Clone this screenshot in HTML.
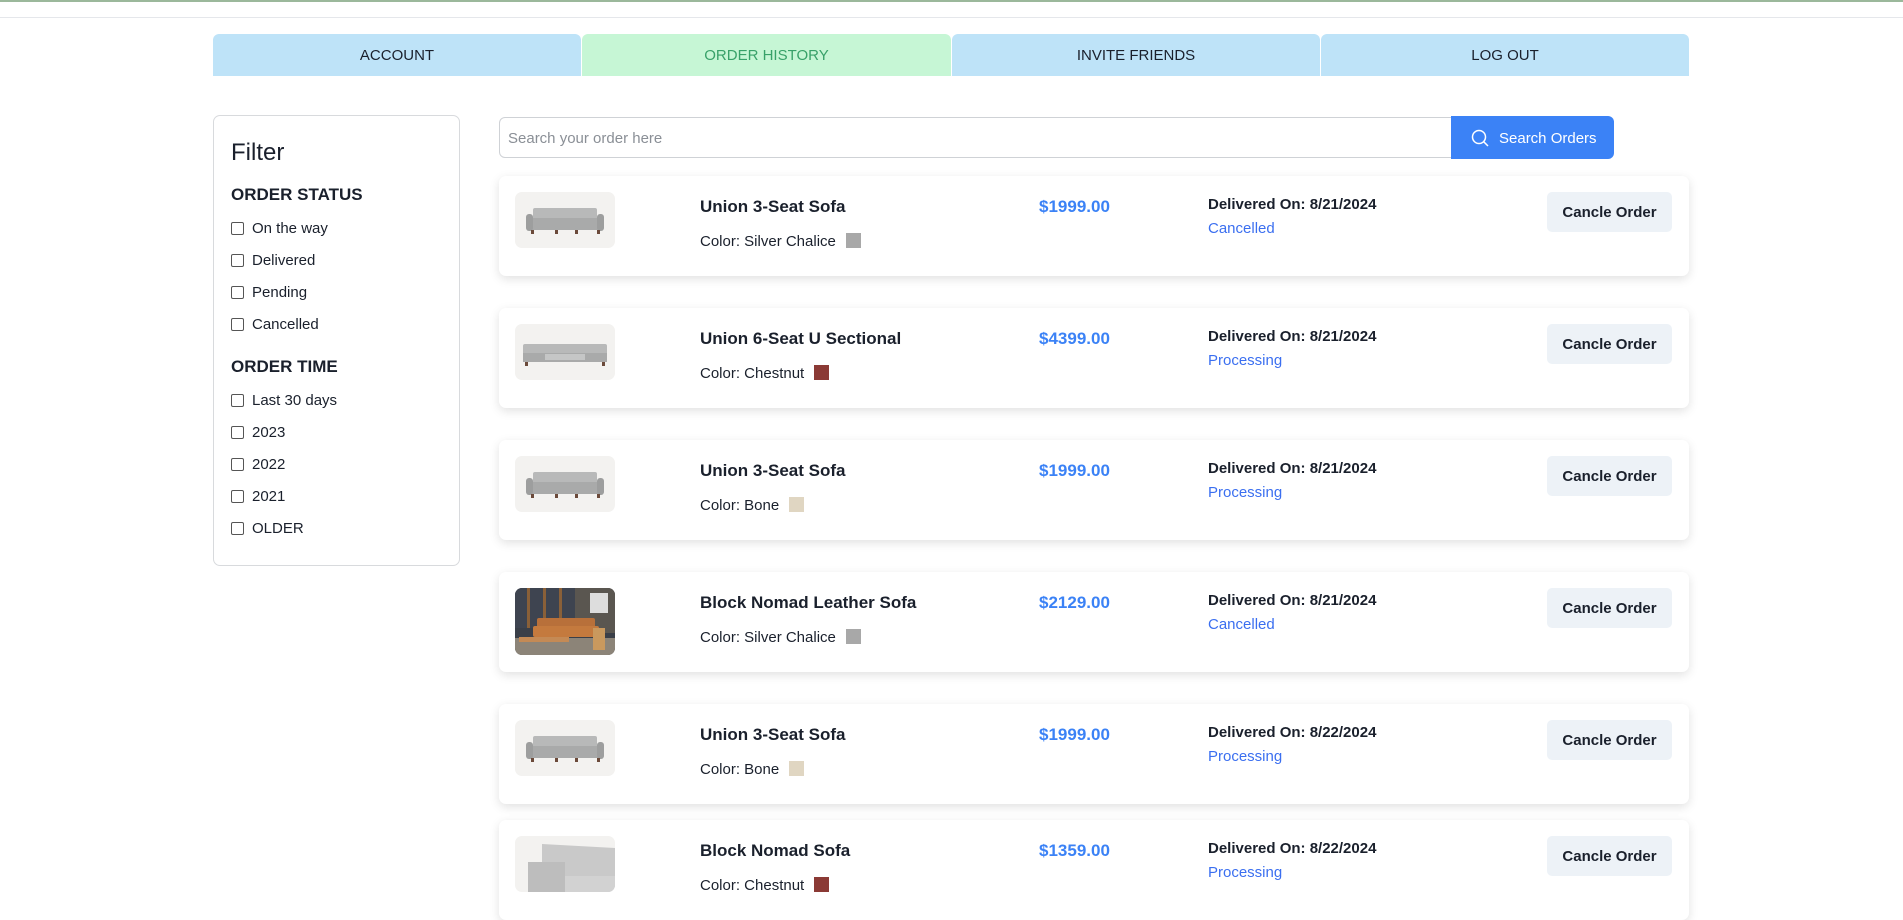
<!DOCTYPE html>
<html><head><meta charset="utf-8"><style>
*{box-sizing:border-box;margin:0;padding:0}
body{width:1903px;height:920px;overflow:hidden;background:#fff;font-family:"Liberation Sans",sans-serif;color:#1a202c;position:relative}
.topl{position:absolute;left:0;top:0;width:1903px;height:2px;background:#9bb89b}
.grl{position:absolute;left:0;top:17px;width:1903px;height:1px;background:#e5e7eb}
.tab{position:absolute;top:34px;height:42px;line-height:44px;text-align:center;font-size:15px;background:#bee3f8;color:#1a202c;border-radius:6px 6px 0 0}
.filter{position:absolute;left:213px;top:115px;width:247px;height:451px;border:1px solid #d8dadd;border-radius:7px}
.ab{position:absolute}
.cb{position:absolute;left:17px;width:13px;height:13px;border:1px solid #555;border-radius:2px}
.lbl{position:absolute;left:38px;font-size:15px;color:#1a202c}
.search{position:absolute;left:499px;top:117px;width:953px;height:41px;border:1px solid #cfd2d6;border-radius:6px 0 0 6px;font-size:15px;color:#8a8f96;padding-left:8px;line-height:41px}
.sbtn{position:absolute;left:1451px;top:116px;width:163px;height:43px;background:#3b82f6;border-radius:0 6px 6px 0;color:#fff;font-size:15px;line-height:45px;padding-left:48px}
.card{position:absolute;left:499px;width:1190px;height:100px;background:#fff;border-radius:7px;box-shadow:0 3px 10px rgba(0,0,0,.12)}
.img{position:absolute;left:16px;top:16px;width:100px;height:56px;background:#f3f2f0;border-radius:7px;overflow:hidden}
.name{position:absolute;left:201px;top:21px;font-size:17px;font-weight:bold;color:#1a202c}
.col{position:absolute;left:201px;top:57px;font-size:15px}
.sw{display:inline-block;width:15px;height:15px;vertical-align:-2px;margin-left:10px}
.price{position:absolute;left:540px;top:21px;font-size:17px;font-weight:bold;color:#3b82f6}
.del{position:absolute;left:709px;top:20px;font-size:15px;font-weight:bold}
.st{position:absolute;left:709px;top:44px;font-size:15px;color:#3b6ff0}
.btn{position:absolute;left:1048px;top:16px;width:125px;height:40px;background:#edf2f7;border-radius:5px;font-size:15px;font-weight:bold;text-align:center;line-height:42px}
</style></head><body>
<div class="topl"></div><div class="grl"></div>
<div class="tab" style="left:213px;width:368px">ACCOUNT</div>
<div class="tab" style="left:582px;width:369px;background:#c6f6d5;color:#38a169">ORDER HISTORY</div>
<div class="tab" style="left:952px;width:368px">INVITE FRIENDS</div>
<div class="tab" style="left:1321px;width:368px">LOG OUT</div>

<div class="filter">
<div class="ab" style="left:17px;top:23px;font-size:24px">Filter</div>
<div class="ab" style="left:17px;top:69px;font-size:17px;font-weight:bold">ORDER STATUS</div>
<div class="cb" style="top:106px"></div><div class="lbl" style="top:104px">On the way</div>
<div class="cb" style="top:138px"></div><div class="lbl" style="top:136px">Delivered</div>
<div class="cb" style="top:170px"></div><div class="lbl" style="top:168px">Pending</div>
<div class="cb" style="top:202px"></div><div class="lbl" style="top:200px">Cancelled</div>
<div class="ab" style="left:17px;top:241px;font-size:17px;font-weight:bold">ORDER TIME</div>
<div class="cb" style="top:278px"></div><div class="lbl" style="top:276px">Last 30 days</div>
<div class="cb" style="top:310px"></div><div class="lbl" style="top:308px">2023</div>
<div class="cb" style="top:342px"></div><div class="lbl" style="top:340px">2022</div>
<div class="cb" style="top:374px"></div><div class="lbl" style="top:372px">2021</div>
<div class="cb" style="top:406px"></div><div class="lbl" style="top:404px">OLDER</div>
</div>

<div class="search">Search your order here</div>
<div class="sbtn"><svg style="position:absolute;left:20px;top:13px" width="18" height="18" viewBox="0 0 18 18" fill="none" stroke="#fff" stroke-width="1.5"><circle cx="8" cy="8" r="6.5"/><path d="M12.8 12.8L17 17"/></svg>Search Orders</div>

<svg width="0" height="0" style="position:absolute"><defs>
<g id="sofa"><rect x="18" y="16" width="64" height="12" rx="2" fill="#b8b9b9"/><rect x="14" y="26" width="72" height="12" rx="2" fill="#a9aaaa"/><rect x="11" y="22" width="7" height="17" rx="3" fill="#9d9e9e"/><rect x="82" y="22" width="7" height="17" rx="3" fill="#9d9e9e"/><rect x="16" y="38" width="3" height="4" fill="#6b4a3a"/><rect x="40" y="38" width="3" height="4" fill="#6b4a3a"/><rect x="60" y="38" width="3" height="4" fill="#6b4a3a"/><rect x="82" y="38" width="3" height="4" fill="#6b4a3a"/></g>
</defs></svg>

<div class="card" style="top:176px"><div class="img"><svg width="100" height="56"><use href="#sofa"/></svg></div>
<div class="name">Union 3-Seat Sofa</div><div class="col">Color: Silver Chalice<span class="sw" style="background:#a8a8a8"></span></div>
<div class="price">$1999.00</div><div class="del">Delivered On: 8/21/2024</div><div class="st">Cancelled</div><div class="btn">Cancle Order</div></div>

<div class="card" style="top:308px"><div class="img"><svg width="100" height="56"><rect x="8" y="20" width="84" height="12" rx="2" fill="#b8b9b9"/><rect x="8" y="29" width="84" height="9" fill="#a9aaaa"/><rect x="30" y="30" width="40" height="6" fill="#c5c6c6"/><rect x="10" y="38" width="3" height="4" fill="#6b4a3a"/><rect x="87" y="38" width="3" height="4" fill="#6b4a3a"/></svg></div>
<div class="name">Union 6-Seat U Sectional</div><div class="col">Color: Chestnut<span class="sw" style="background:#8b3a35"></span></div>
<div class="price">$4399.00</div><div class="del">Delivered On: 8/21/2024</div><div class="st">Processing</div><div class="btn">Cancle Order</div></div>

<div class="card" style="top:440px"><div class="img"><svg width="100" height="56"><use href="#sofa"/></svg></div>
<div class="name">Union 3-Seat Sofa</div><div class="col">Color: Bone<span class="sw" style="background:#e0d6c2"></span></div>
<div class="price">$1999.00</div><div class="del">Delivered On: 8/21/2024</div><div class="st">Processing</div><div class="btn">Cancle Order</div></div>

<div class="card" style="top:572px"><div class="img" style="height:67px;top:16px;background:#3a3f48"><svg width="100" height="67"><rect x="0" y="0" width="60" height="40" fill="#3e4450"/><rect x="60" y="0" width="40" height="45" fill="#5a5650"/><rect x="75" y="5" width="18" height="20" fill="#ddd"/><rect x="12" y="0" width="3" height="40" fill="#8a6038"/><rect x="28" y="0" width="3" height="40" fill="#8a6038"/><rect x="44" y="0" width="3" height="40" fill="#8a6038"/><rect x="0" y="50" width="100" height="17" fill="#8c8478"/><rect x="22" y="30" width="58" height="12" rx="2" fill="#b8703a"/><rect x="18" y="38" width="66" height="11" rx="2" fill="#c47a3e"/><rect x="4" y="49" width="50" height="5" fill="#c48a55"/><rect x="78" y="40" width="12" height="22" fill="#c9995e"/></svg></div>
<div class="name">Block Nomad Leather Sofa</div><div class="col">Color: Silver Chalice<span class="sw" style="background:#a8a8a8"></span></div>
<div class="price">$2129.00</div><div class="del">Delivered On: 8/21/2024</div><div class="st">Cancelled</div><div class="btn">Cancle Order</div></div>

<div class="card" style="top:704px"><div class="img"><svg width="100" height="56"><use href="#sofa"/></svg></div>
<div class="name">Union 3-Seat Sofa</div><div class="col">Color: Bone<span class="sw" style="background:#e0d6c2"></span></div>
<div class="price">$1999.00</div><div class="del">Delivered On: 8/22/2024</div><div class="st">Processing</div><div class="btn">Cancle Order</div></div>

<div class="card" style="top:820px"><div class="img"><svg width="100" height="56"><path d="M27 8L100 12V56H27Z" fill="#c9c9c9"/><path d="M13 26H50V56H13Z" fill="#bdbdbd"/><path d="M50 40H100V56H50Z" fill="#d2d2d2"/></svg></div>
<div class="name">Block Nomad Sofa</div><div class="col">Color: Chestnut<span class="sw" style="background:#8b3a35"></span></div>
<div class="price">$1359.00</div><div class="del">Delivered On: 8/22/2024</div><div class="st">Processing</div><div class="btn">Cancle Order</div></div>
</body></html>
